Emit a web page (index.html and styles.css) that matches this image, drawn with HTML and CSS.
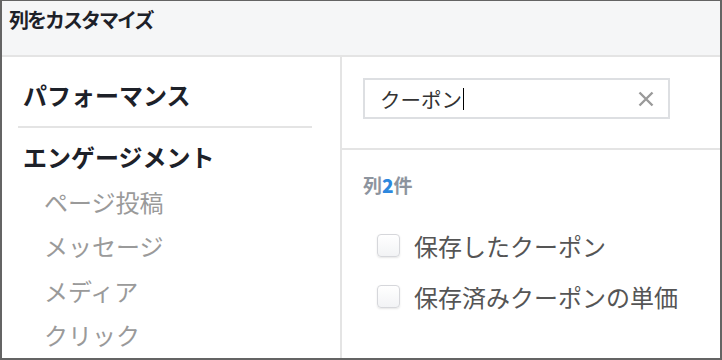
FILE: index.html
```html
<!DOCTYPE html>
<html lang="ja">
<head>
    <meta charset="UTF-8">
    <title>列をカスタマイズ</title>
    <link rel="stylesheet" href="styles.css">
</head>
<body>
<div class="dialog">
    <div class="dlg_head">列をカスタマイズ</div>
    <div class="dlg_body">
        <div class="side">
            <div class="side_title">パフォーマンス</div>
            <div class="side_line"></div>
            <div class="side_title second">エンゲージメント</div>
            <ul class="side_list">
                <li>ページ投稿</li>
                <li>メッセージ</li>
                <li>メディア</li>
                <li>クリック</li>
            </ul>
        </div>
        <div class="main">
            <div class="search_area">
                <div class="search_box">
                    <span class="search_text">クーポン</span><span class="caret"></span>
                    <svg class="clear" width="16" height="16" viewBox="0 0 16 16">
                        <path d="M1.5 1.5L14.5 14.5M14.5 1.5L1.5 14.5" stroke="#9a9a9a" stroke-width="2.4" fill="none"/>
                    </svg>
                </div>
            </div>
            <div class="result">
                <div class="count">列<b>2</b>件</div>
                <ul class="col_list">
                    <li><span class="chk"></span>保存したクーポン</li>
                    <li><span class="chk"></span>保存済みクーポンの単価</li>
                </ul>
            </div>
        </div>
    </div>
</div>
</body>
</html>
```

FILE: styles.css
```css
*{
    margin:0;
    padding:0;
    box-sizing:border-box;
}
body{
    font-family:"Noto Sans CJK JP","Noto Sans",sans-serif;
    background:#fff;
}
ul{
    list-style:none;
}
.dialog{
    width:722px;
    height:360px;
    border:2px solid #646464;
    border-top-width:1px;
    display:flex;
    flex-direction:column;
    overflow:hidden;
}
.dlg_head{
    height:56px;
    flex:none;
    background:#f5f6f7;
    border-bottom:2px solid #e4e4e4;
    padding-left:7px;
    padding-top:4px;
    font-size:20px;
    font-weight:bold;
    line-height:30px;
    letter-spacing:-2px;
    color:#1d2129;
}
.dlg_body{
    flex:1;
    display:flex;
}
.side{
    width:340px;
    flex:none;
    border-right:2px solid #e4e4e4;
    padding:22px 28px 0 16px;
}
.side_title{
    font-size:24px;
    font-weight:bold;
    line-height:32px;
    color:#1d2129;
    padding-left:5px;
}
.side_title.second{
    margin-top:13px;
}
.side_line{
    height:2px;
    background:#e4e4e4;
    margin-top:15px;
}
.side_list{
    margin-top:7px;
}
.side_list li{
    font-size:24px;
    line-height:44.4px;
    color:#9a9a9a;
    padding-left:26px;
}
.main{
    flex:1;
}
.search_area{
    height:93px;
    border-bottom:2px solid #e4e4e4;
    padding:21px 0 0 21px;
}
.search_box{
    width:307px;
    height:41px;
    border:2px solid #dddfe2;
    display:flex;
    align-items:center;
    padding-left:15px;
    padding-right:14px;
}
.search_text{
    font-size:20.5px;
    color:#333;
}
.caret{
    width:1px;
    height:22px;
    background:#000;
    margin-left:1px;
}
.clear{
    margin-left:auto;
}
.result{
    padding:23px 0 0 21px;
}
.count{
    font-size:19px;
    font-weight:bold;
    line-height:24px;
    color:#8d949e;
}
.count b{
    color:#2d88de;
}
.col_list{
    margin-top:28px;
    padding-left:14px;
}
.col_list li{
    display:flex;
    align-items:center;
    height:40px;
    font-size:24px;
    color:#555;
    margin-bottom:11px;
}
.chk{
    flex:none;
    width:23px;
    height:23px;
    border:1px solid #d6d7db;
    border-radius:4px;
    background:linear-gradient(#fff,#f2f3f5);
    box-shadow:0 1px 2px rgba(0,0,0,.1);
    margin-right:14px;
}
```
